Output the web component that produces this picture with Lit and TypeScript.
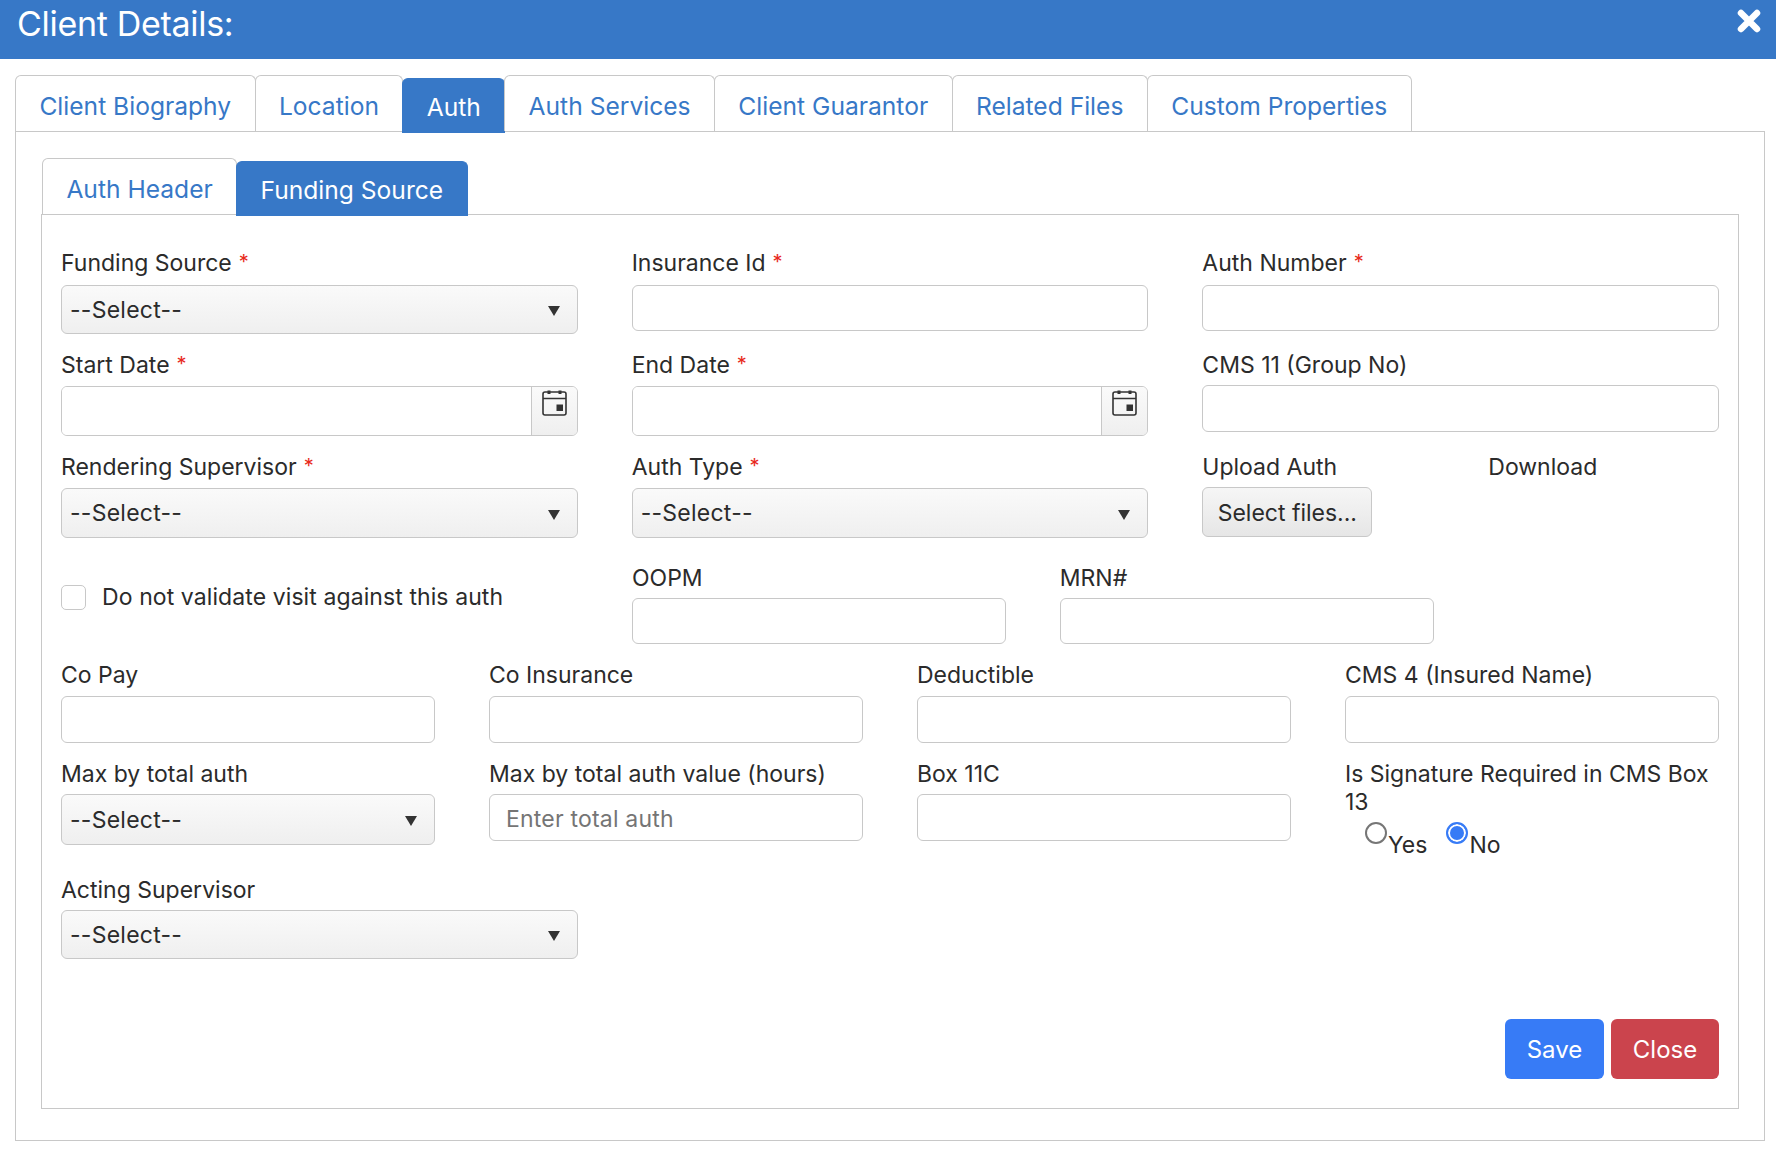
import { LitElement, html, css } from "lit";
import { customElement } from "lit/decorators.js";

const req = html`<span class="req">*</span>`;
const sel = (cls = "") => html`<div class="select ${cls}"><span>--Select--</span><i class="arrow"></i></div>`;
const cal = html`<svg class="cal" viewBox="0 0 25 26" width="25" height="26" aria-hidden="true">
  <rect x="1" y="2" width="23" height="23" rx="2" fill="none" stroke="#333" stroke-width="1.6"/>
  <path d="M1 8.5H24" stroke="#333" stroke-width="1.6"/>
  <path d="M5.5 0.5h3v3.5h-3zM16.5 0.5h3v3.5h-3z" fill="#333"/>
  <rect x="14.5" y="14.5" width="6.5" height="6.5" fill="#333"/>
</svg>`;
const date = html`<div class="date"><div class="date-input"></div><div class="addon">${cal}</div></div>`;

@customElement("app-root")
export class AppRoot extends LitElement {
  static styles = css`
    :host { display: block; width: 1776px; height: 1166px; background: #fff; font-family: Inter, "Noto Sans", sans-serif; color: #2b2b2b; overflow: hidden; }
    * { box-sizing: border-box; }
    .head { height: 59px; background: #3778c7; color: #fff; display: flex; justify-content: space-between; padding: 4px 15px 0 17px; }
    .title { font-size: 34px; line-height: 40px; letter-spacing: -0.3px; font-weight: 400; }
    .x { margin-top: 5px; }
    .tabs { display: flex; align-items: flex-start; position: relative; z-index: 1; height: 57px; }
    .outer-tabs { margin: 16px 0 0 15px; }
    .inner-tabs { margin: 0 0 0 1px; }
    .tab { height: 56px; padding: 14.5px 23.4px 0; border: 1px solid #c8c8c8; border-bottom: none; border-radius: 6px 6px 0 0; font-size: 24.6px; line-height: 30px; color: #3778c7; background: #fff; white-space: nowrap; margin-right: -1px; }
    .tab.on { background: #3778c7; color: #fff; height: 55px; margin-top: 3px; padding-top: 13px; border-color: #3778c7; }
    .outer-box { margin: -1px 11px 0 15px; height: 1010px; border: 1px solid #c8c8c8; padding: 26px 25px 0 25px; }
    .inner-box { margin-top: -1px; height: 895px; border: 1px solid #c8c8c8; padding: 34px 19px 0 19px; position: relative; }
    .row { display: grid; gap: 0 54px; }
    .c3 { grid-template-columns: repeat(3, 1fr); }
    .c4 { grid-template-columns: repeat(4, 1fr); }
    .mix { grid-template-columns: 517px 373.75px 373.75px; }
    .r2 { margin-top: 17px; }
    .r3 { margin-top: 17px; }
    .r4 { margin-top: 26px; }
    .r5 { margin-top: 17px; }
    .r6 { margin-top: 17px; }
    .r7 { margin-top: 17px; }
    label, .lbl { display: block; font-size: 23px; line-height: 28px; margin-bottom: 7px; white-space: nowrap; }
    .r2 label, .r3 label, .mix label, .r6 label, .r7 label { margin-bottom: 6px; }
    .req { color: #e8291c; margin-left: 7px; font-size: 20px; position: relative; top: -2px; }
    .input { display: block; width: 100%; height: 46px; border: 1px solid #c8c8c8; border-radius: 6px; background: #fff; font: inherit; font-size: 23px; letter-spacing: 0.2px; padding: 2px 16px 0; color: #2b2b2b; outline: none; }
    .c4 .input { height: 47px; }
    .input::placeholder { color: #757575; opacity: 1; }
    .h47 { height: 47px; }
    .select { height: 49px; border: 1px solid #c8c8c8; border-radius: 6px; background: linear-gradient(#fafafa, #efefef); display: flex; align-items: center; justify-content: space-between; padding: 0 17px 0 8px; font-size: 23px; letter-spacing: 0.25px; }
    .h50 { height: 50px; }
    .c4 .select { height: 51px; }
    .arrow { width: 0; height: 0; border-left: 6.5px solid transparent; border-right: 6.5px solid transparent; border-top: 10px solid #333; margin-top: 3px; }
    .date { display: flex; height: 50px; border: 1px solid #c8c8c8; border-radius: 6px; overflow: hidden; }
    .date-input { flex: 1; background: #fff; }
    .addon { width: 46px; border-left: 1px solid #c8c8c8; background: linear-gradient(#fafafa, #efefef); padding: 3px 0 0 10px; }
    .cal { display: block; }
    .upload { display: grid; grid-template-columns: 286px 1fr; }
    .upload-btn { width: 170px; height: 50px; padding-top: 2px; border: 1px solid #c8c8c8; border-radius: 6px; background: linear-gradient(#f6f6f6, #e6e6e6); display: flex; align-items: center; justify-content: center; font-size: 23px; }
    .check { display: flex; align-items: center; align-self: start; gap: 16px; font-size: 23px; letter-spacing: 0.09px; line-height: 28px; margin-top: 19px; }
    .box { width: 25px; height: 25px; border: 1px solid #c8c8c8; border-radius: 5px; background: #fff; }
    label.two-line { white-space: normal; line-height: 28px; margin-bottom: 0; }
    .radios { display: flex; padding-left: 20px; margin-top: 5px; font-size: 23px; }
    .radio { display: flex; margin-right: 19px; }
    .dot { width: 22px; height: 22px; border: 2px solid #767676; border-radius: 50%; background: #fff; margin-top: 1px; margin-right: 1px; }
    .dot.on { border-color: #377bf6; box-shadow: inset 0 0 0 2px #fff; background: #377bf6; }
    .rt { line-height: 28px; margin-top: 10px; }
    .actions { position: absolute; right: 19px; bottom: 29px; display: flex; gap: 7px; }
    .btn { height: 60px; border-radius: 6px; color: #fff; font-size: 24px; display: flex; align-items: center; justify-content: center; }
    .save { width: 99px; background: #377bf6; }
    .close { width: 108px; background: #cb444d; }
  `;

  render() {
    return html`
      <div class="head">
        <div class="title">Client Details:</div>
        <svg class="x" width="24" height="24" viewBox="0 0 24 24" aria-hidden="true"><path d="M4 4L20 20M20 4L4 20" stroke="#fff" stroke-width="6.5" stroke-linecap="round"/></svg>
      </div>
      <div class="tabs outer-tabs">
        ${["Client Biography", "Location", "Auth", "Auth Services", "Client Guarantor", "Related Files", "Custom Properties"].map(
          (t) => html`<div class="tab ${t === "Auth" ? "on" : ""}">${t}</div>`
        )}
      </div>
      <div class="outer-box">
        <div class="tabs inner-tabs">
          <div class="tab">Auth Header</div>
          <div class="tab on">Funding Source</div>
        </div>
        <div class="inner-box">
          <div class="row c3">
            <div><label>Funding Source${req}</label>${sel()}</div>
            <div><label>Insurance Id${req}</label><input class="input" /></div>
            <div><label>Auth Number${req}</label><input class="input" /></div>
          </div>
          <div class="row c3 r2">
            <div><label>Start Date${req}</label>${date}</div>
            <div><label>End Date${req}</label>${date}</div>
            <div><label>CMS 11 (Group No)</label><input class="input h47" /></div>
          </div>
          <div class="row c3 r3">
            <div><label>Rendering Supervisor${req}</label>${sel("h50")}</div>
            <div><label>Auth Type${req}</label>${sel("h50")}</div>
            <div class="upload">
              <div><label>Upload Auth</label><div class="upload-btn">Select files...</div></div>
              <div><label>Download</label></div>
            </div>
          </div>
          <div class="row mix r4">
            <div class="check"><span class="box"></span><span>Do not validate visit against this auth</span></div>
            <div><label>OOPM</label><input class="input" /></div>
            <div><label>MRN#</label><input class="input" /></div>
          </div>
          <div class="row c4 r5">
            <div><label>Co Pay</label><input class="input" /></div>
            <div><label>Co Insurance</label><input class="input" /></div>
            <div><label>Deductible</label><input class="input" /></div>
            <div><label>CMS 4 (Insured Name)</label><input class="input" /></div>
          </div>
          <div class="row c4 r6">
            <div><label>Max by total auth</label>${sel()}</div>
            <div><label>Max by total auth value (hours)</label><input class="input" placeholder="Enter total auth" /></div>
            <div><label>Box 11C</label><input class="input" /></div>
            <div>
              <label class="two-line">Is Signature Required in CMS Box 13</label>
              <div class="radios">
                <div class="radio"><span class="dot"></span><span class="rt">Yes</span></div>
                <div class="radio"><span class="dot on"></span><span class="rt">No</span></div>
              </div>
            </div>
          </div>
          <div class="row c3 r7">
            <div><label>Acting Supervisor</label>${sel()}</div>
          </div>
          <div class="actions">
            <div class="btn save">Save</div>
            <div class="btn close">Close</div>
          </div>
        </div>
      </div>
    `;
  }
}
